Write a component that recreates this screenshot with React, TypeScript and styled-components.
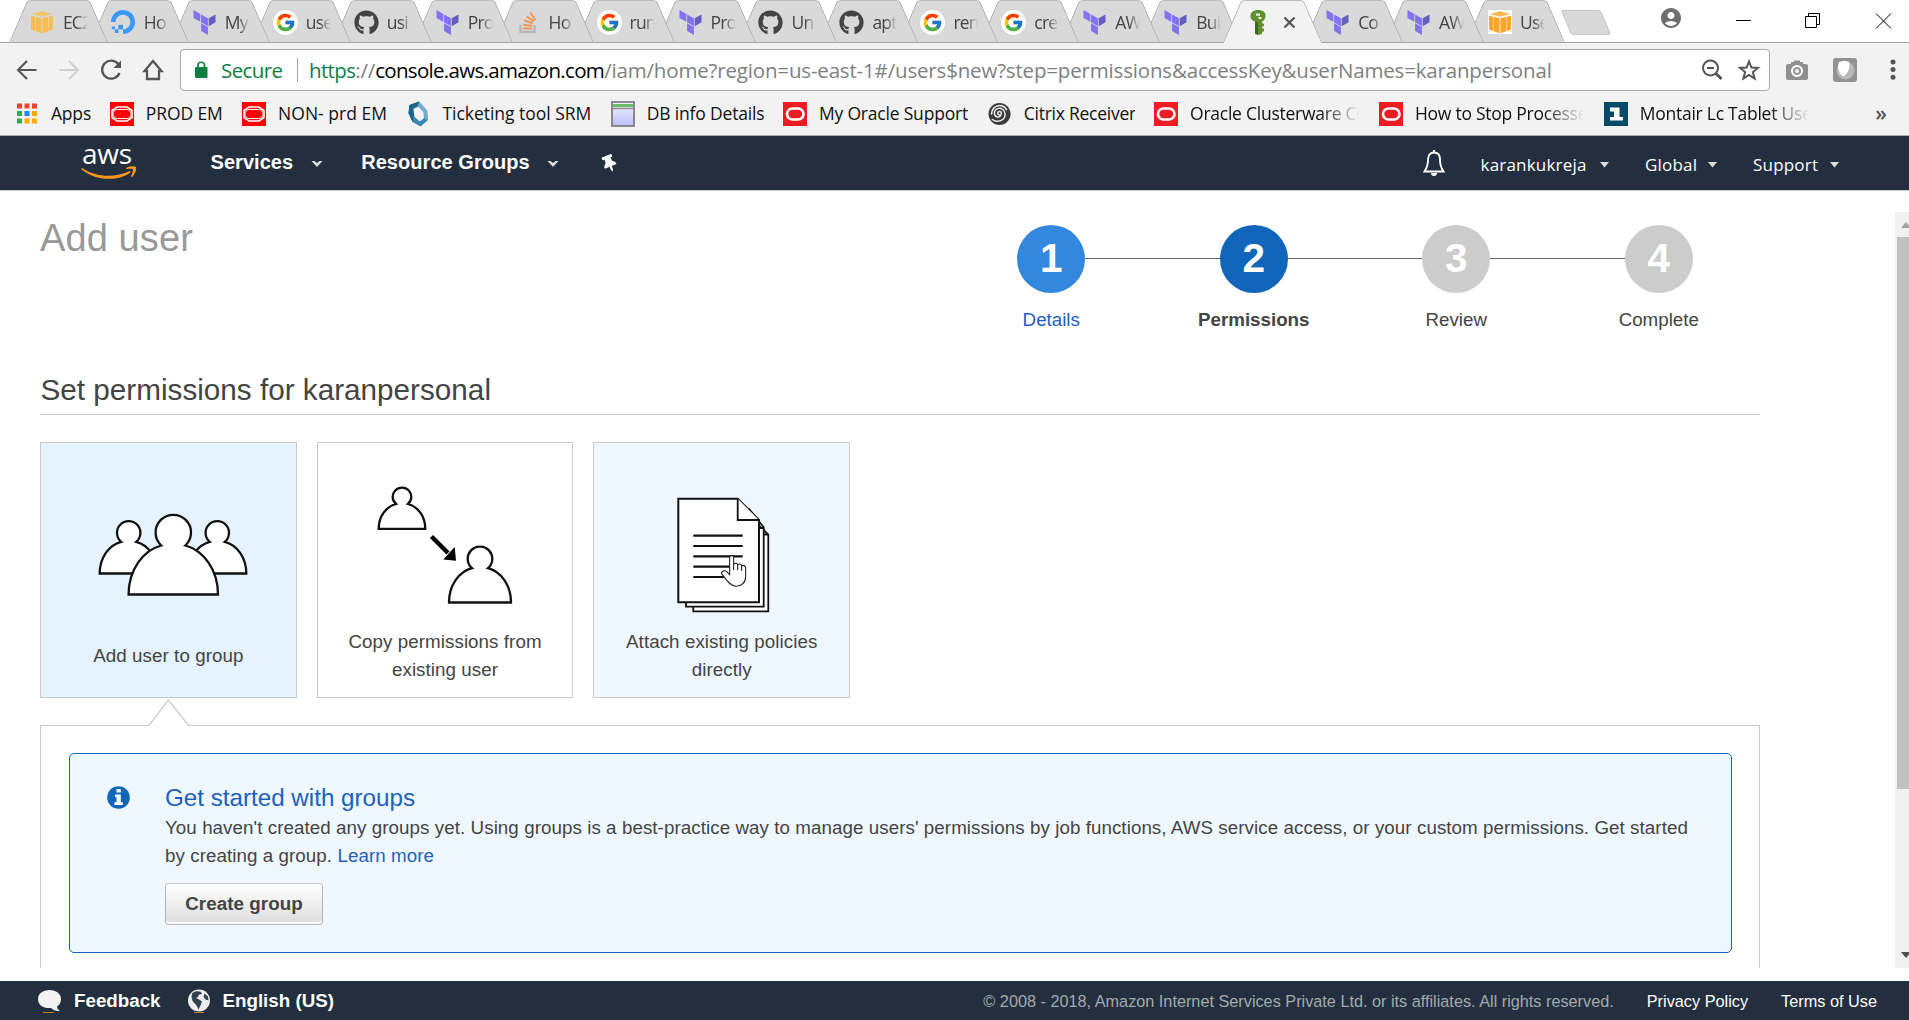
import React from "react";
import styled, { createGlobalStyle, css } from "styled-components";
import { FcGoogle } from "react-icons/fc";
import { FaGithub, FaThumbtack } from "react-icons/fa";
import { SiDigitalocean } from "react-icons/si";
import { MdAccountCircle } from "react-icons/md";

const GlobalStyle = createGlobalStyle`
  *, *::before, *::after { box-sizing: border-box; }
  html, body { margin: 0; padding: 0; background: #fff; overflow: hidden; }
  svg { display: block; flex: none; }
`;

const ui = `"Open Sans", "Noto Sans", sans-serif`;
const sans = `"Liberation Sans", Arial, sans-serif`;

const Window = styled.div`
  display: flex;
  flex-direction: column;
  width: 1909px;
  height: 1020px;
  overflow: hidden;
  font-family: ${sans};
  font-size: 18.75px;
  line-height: 28px;
  color: #444;
`;

/* ---------- tab strip ---------- */

const TabStrip = styled.div`
  display: flex;
  flex: none;
  height: 43px;
  padding-left: 9px;
  border-bottom: 1px solid #a3a3a3;
`;

const Tab = styled.div<{ $order: number; $active?: boolean }>`
  position: relative;
  flex: none;
  display: flex;
  align-items: center;
  width: 99.4px;
  height: 43px;
  padding: 1px 0 0 ${(p) => (p.$active ? 27 : 21.4)}px;
  margin-right: -18.45px;
  z-index: ${(p) => p.$order};

  &::before,
  &::after {
    content: "";
    position: absolute;
    top: 0;
    bottom: 0;
    z-index: -1;
    background: ${(p) => (p.$active ? "#f2f2f2" : "#d9d9d9")};
    border-top: 1px solid #bcbcbc;
    border-bottom: ${(p) => (p.$active ? "0" : "1px solid #a3a3a3")};
  }
  &::before {
    left: 9px;
    right: 32px;
    border-left: 1.4px solid #a6a6a6;
    border-top-left-radius: 4px;
    transform: skewX(-23.3deg);
  }
  &::after {
    left: 32px;
    right: 9px;
    border-right: 1.4px solid #a6a6a6;
    border-top-right-radius: 4px;
    transform: skewX(23.3deg);
  }
`;

const TabIcon = styled.span`
  display: flex;
  align-items: center;
  justify-content: center;
  width: 24px;
  height: 24px;
  flex: none;
`;

const TabTitle = styled.span`
  width: 25px;
  margin-left: 8.5px;
  overflow: hidden;
  white-space: nowrap;
  font: 17.5px/24px ${ui};
  letter-spacing: -0.8px;
  color: #444;
  mask-image: linear-gradient(to right, #000 55%, transparent 100%);
`;

const GoogleDisc = styled.span`
  display: flex;
  padding: 2px;
  border-radius: 50%;
  background: #fff;
`;

const TabClose = styled.span`
  display: flex;
  margin-left: 17px;
`;

const NewTab = styled.div`
  flex: none;
  width: 40px;
  height: 25px;
  margin: 10px 0 0 19px;
  background: #d9d9d9;
  border: 1px solid #c4c4c4;
  border-radius: 3px;
  transform: skewX(23deg);
`;

const WindowControls = styled.div`
  display: flex;
  align-items: flex-start;
  gap: 53px;
  margin-left: auto;
  padding: 12px 17px 0 0;
`;

const Account = styled.span`
  display: flex;
  margin-top: -6px;
`;

/* ---------- toolbar ---------- */

const Toolbar = styled.div`
  display: flex;
  flex: none;
  align-items: center;
  height: 54px;
  padding: 0 0 0 15px;
  background: #f2f2f2;
`;

const NavButtons = styled.div`
  display: flex;
  gap: 18px;
  margin-right: 15px;
`;

const Omnibox = styled.div`
  display: flex;
  flex: none;
  align-items: center;
  width: 1590px;
  height: 42px;
  padding: 0 8px 0 14px;
  background: #fff;
  border: 1px solid #a9a9a9;
  border-radius: 4px;
  font: 20.5px/28px ${ui};
  white-space: nowrap;
`;

const Secure = styled.span`
  width: 62px;
  margin-left: 13px;
  color: #0b8043;
  letter-spacing: -0.6px;
`;

const Divider = styled.span`
  width: 1px;
  height: 24px;
  margin: 0 11px 0 14px;
  background: #a5a5a5;
`;

const Url = styled.span`
  flex: 1;
  color: #808080;
  letter-spacing: -0.17px;
`;
const UrlScheme = styled.span`
  color: #0b8043;
  letter-spacing: -0.65px;
`;
const UrlHost = styled.span`
  color: #000;
  letter-spacing: -0.69px;
`;

const OmniActions = styled.span`
  display: flex;
  gap: 13px;
`;

const Extensions = styled.div`
  display: flex;
  align-items: center;
  gap: 24px;
  margin-left: 15px;
`;

const Dots = styled.span`
  display: flex;
  margin-left: 9px;
`;

/* ---------- bookmarks ---------- */

const BookmarkBar = styled.div`
  display: flex;
  flex: none;
  align-items: center;
  height: 39px;
  padding: 0 22px 4px 15px;
  background: #f2f2f2;
  border-bottom: 1px solid #aaa;
`;

const Bookmark = styled.div`
  display: flex;
  align-items: center;
  flex: none;
  gap: 12px;
  margin-right: 19.3px;
`;

const BookmarkLabel = styled.span<{ $w: number; $ls: number; $fade?: boolean }>`
  width: ${(p) => p.$w}px;
  overflow: hidden;
  white-space: nowrap;
  font: 17.5px/26px ${ui};
  letter-spacing: ${(p) => p.$ls}px;
  padding-bottom: 2px;
  color: #111;
  ${(p) =>
    p.$fade &&
    css`
      mask-image: linear-gradient(to right, #000 calc(100% - 40px), transparent 100%);
    `}
`;

const More = styled.span`
  margin-left: auto;
  padding-bottom: 2px;
  font: 600 21px/24px ${ui};
  color: #555;
`;

/* ---------- console navigation ---------- */

const ConsoleNav = styled.nav`
  display: flex;
  flex: none;
  align-items: center;
  height: 55px;
  padding: 0 70px 0 81px;
  background: #232f3e;
  border-bottom: 1px solid #c9ccd0;
  color: #fff;
`;

const Logo = styled.div`
  display: flex;
  flex-direction: column;
  width: 56px;
  margin-right: 73.5px;
`;

const LogoWord = styled.span`
  height: 19px;
  padding-left: 1px;
  font: 500 28px/13px ${ui};
  letter-spacing: -0.2px;
`;

const NavItem = styled.div`
  display: flex;
  align-items: center;
  gap: 17.5px;
  margin-right: 38.5px;
  padding-bottom: 2px;
  font-weight: bold;
  font-size: 20px;
  letter-spacing: 0.05px;
`;

const Pin = styled.span`
  display: flex;
  margin-left: 3px;
  transform: rotate(-22deg);
`;

const AccountNav = styled.div`
  display: flex;
  align-items: center;
  gap: 36px;
  margin-left: auto;
`;

const AccountItem = styled.div<{ $w: number }>`
  display: flex;
  align-items: center;
  gap: 12px;
  font: 17px/24px ${ui};
  letter-spacing: 0.2px;
  padding-top: 3px;
  white-space: nowrap;
  & > span {
    width: ${(p) => p.$w}px;
  }
`;

/* ---------- page ---------- */

const Main = styled.main`
  display: flex;
  flex: none;
  height: 777px;
  overflow: hidden;
`;

const Content = styled.div`
  display: flex;
  flex-direction: column;
  width: 1720px;
  margin-left: 40px;
`;

const PageHead = styled.header`
  display: flex;
  flex: none;
  justify-content: space-between;
  align-items: flex-start;
  height: 181px;
  padding-top: 26px;
`;

const Title = styled.h1`
  margin: 0;
  font-weight: normal;
  font-size: 38px;
  line-height: 43px;
  letter-spacing: 0.1px;
  color: #999;
`;

const Steps = styled.ol`
  display: flex;
  margin: 8px 0 0;
  padding: 0;
  list-style: none;
`;

const Step = styled.li<{ $current?: boolean; $link?: boolean }>`
  position: relative;
  display: flex;
  flex-direction: column;
  align-items: center;
  gap: 13px;
  width: 202.5px;
  color: ${(p) => (p.$link ? "#1e5fbf" : "#444")};
  font-weight: ${(p) => (p.$current ? "bold" : "normal")};

  &:not(:last-child)::before {
    content: "";
    position: absolute;
    top: 33px;
    left: 50%;
    width: 100%;
    height: 1px;
    background: #666;
  }
`;

const StepCircle = styled.span<{ $color: string }>`
  position: relative;
  z-index: 1;
  width: 68px;
  height: 68px;
  border-radius: 50%;
  background: ${(p) => p.$color};
  color: #fff;
  font-weight: bold;
  font-size: 40.5px;
  line-height: 67px;
  text-align: center;
`;

const SectionTitle = styled.h2`
  flex: none;
  margin: 0 0 27px;
  padding: 0 0 6px 0.5px;
  height: 43px;
  border-bottom: 1px solid #ccc;
  font-weight: normal;
  font-size: 29.7px;
  line-height: 36px;
`;

const Cards = styled.div`
  display: flex;
  flex: none;
  gap: 20px;
  margin-bottom: 27px;
`;

const Card = styled.div<{ $bg: string; $bottom: number }>`
  display: flex;
  flex-direction: column;
  width: 256.7px;
  height: 256px;
  padding-bottom: ${(p) => p.$bottom}px;
  background: ${(p) => p.$bg};
  border: 1px solid #ccc;
  text-align: center;
  letter-spacing: 0.07px;
`;

const Art = styled.svg`
  width: 254.7px;
  flex: 1;
  overflow: visible;
  fill: #fff;
  stroke: #111;
  stroke-width: 2.3;
`;

const Panel = styled.section`
  position: relative;
  flex: 1;
  padding: 27px 27px 0 28px;
  border: solid #ccc;
  border-width: 1px 1px 0;
`;

const Notch = styled.svg`
  position: absolute;
  left: 107px;
  top: -27px;
`;

const Notice = styled.div`
  display: flex;
  height: 200px;
  padding: 29px 38px 0 37px;
  background: #f0f8ff;
  border: 1px solid #1166bb;
  border-radius: 5px;
`;

const NoticeIcon = styled.span`
  display: flex;
  width: 58px;
  padding-top: 3px;
`;

const NoticeBody = styled.div`
  flex: 1;
`;

const NoticeTitle = styled.div`
  font-size: 24.2px;
  line-height: 30px;
  color: #1e5fbf;
`;

const NoticeText = styled.p`
  margin: 0 -20px 13px 0;
  padding-top: 1px;
  white-space: nowrap;
  letter-spacing: 0.069px;
`;

const Link = styled.a`
  color: #1e5fbf;
`;

const Button = styled.button`
  display: block;
  width: 158px;
  height: 42px;
  padding: 0 0 1px;
  border: 1px solid #b5b5b5;
  border-top-color: #ccc;
  border-radius: 4px;
  background: linear-gradient(#fff, #ddd);
  box-shadow: inset 0 -2px 0 #fff;
  font: bold 18.75px/28px ${sans};
  letter-spacing: 0.07px;
  color: #444;
`;

const Scrollbar = styled.div`
  display: flex;
  flex-direction: column;
  width: 14px;
  margin: 21px 0 0 auto;
  padding-left: 2px;
  background: #f1f1f1;
`;

const ScrollArrow = styled.span<{ $h: number; $pad: number }>`
  height: ${(p) => p.$h}px;
  padding: ${(p) => p.$pad}px 0 0 4px;
`;

const Thumb = styled.div`
  height: 552px;
  background: #c1c1c1;
`;

/* ---------- footer ---------- */

const Footer = styled.footer`
  display: flex;
  flex: none;
  align-items: center;
  height: 39px;
  margin-top: 13px;
  padding: 0 32px 0 37px;
  background: #232f3e;
  color: #fff;
  font-size: 16.3px;
  white-space: nowrap;
`;

const FooterTool = styled.span`
  display: flex;
  align-items: center;
  gap: 12px;
  margin-right: 26px;
  font-weight: bold;
  font-size: 18.75px;
`;

const Copyright = styled.span`
  margin-left: auto;
  font-size: 16.25px;
  color: #a2aaad;
`;

const FooterLink = styled.a`
  margin-left: 33px;
`;

/* ---------- drawings ---------- */

const Cube = ({ pale }: { pale?: boolean }) => (
  <svg width="24" height="24" viewBox="0 0 24 24">
    {!pale && <rect width="24" height="24" fill="#fff" />}
    <g fill={pale ? "#f6be55" : "#fca62b"}>
      <path d="M2 4.200 12 1l10 3.200L12 6.800z" opacity=".8" />
      <path d="M1 5.800 11.600 8.300V23.200L1 19.500z" />
      <path d="M23 5.800 12.400 8.300V23.200L23 19.500z" />
    </g>
    <path d="M5.500 7v14M18.500 7v14" stroke={pale ? "#f9d48e" : "#fdd391"} strokeWidth=".8" />
  </svg>
);

const Terraform = () => (
  <svg width="25" height="25" viewBox="0 0 24 24" fill="#8373f0">
    <path d="M1.440 0v7.575l6.561 3.790V3.787z" />
    <path d="M8.720 4.230v7.575l6.561 3.787V8.018z" />
    <path d="M8.720 12.635v7.575L15.280 24v-7.578z" />
    <path d="M22.560 4.227l-6.561 3.791v7.574l6.560-3.787z" fill="#675cc0" />
  </svg>
);

const StackIcon = () => (
  <svg width="20" height="24" viewBox="0 0 20 24" fill="none">
    <path d="M2.500 15v7h14v-7" stroke="#b5b7b9" strokeWidth="2.300" />
    <g stroke="#f2995a" strokeWidth="2">
      <path d="M5 18.500h9M5.200 14.700l9 1M6.200 10.500l8.600 2.700M8.500 6.300l7.500 5M12.300 2.500l5 7.500" />
    </g>
  </svg>
);

const KeyIcon = () => (
  <svg width="16" height="25" viewBox="0 0 16 25">
    <path
      d="M8 0c5 0 8 2.500 7.500 6.500C15 9.500 13.500 11 12 11.500V13l2 1v2l-2 .8V18l2 1v2l-2 1v2l-4 1-3-1.500V11.500C2 10.500.5 9 .5 6.500.3 2.500 3.500 0 8 0z"
      fill="#5f8f2f"
    />
    <path d="M5 11.500 8 12v13l-3-1.500z" fill="#3c6a1c" />
    <path d="M6 3.500h4v2.300H6zM8.500 7h3v2h-3z" fill="#e9f3dc" />
  </svg>
);

const icons: Record<string, React.ReactNode> = {
  cube: <Cube pale />,
  cube2: <Cube />,
  ocean: <SiDigitalocean size={24} color="#3b99fc" />,
  terraform: <Terraform />,
  google: (
    <GoogleDisc>
      <FcGoogle size={21} />
    </GoogleDisc>
  ),
  github: <FaGithub size={25} color="#444" />,
  stack: <StackIcon />,
};

const Oracle = ({ old }: { old?: boolean }) => (
  <svg width="24" height="24" viewBox="0 0 24 24">
    <rect width="24" height="24" fill={old ? "#f00" : "#ed1c24"} />
    {old ? (
      <>
        <path d="M7 5h10l5 3.500v7L17 19H7l-5-3.500v-7z" fill="none" stroke="#fff" strokeWidth="1.600" />
        <rect x="3" y="7.500" width="18" height="9" rx="4.500" fill="none" stroke="#fff" strokeWidth="1" />
      </>
    ) : (
      <rect x="4" y="6.500" width="16.500" height="11" rx="5.500" fill="none" stroke="#fff" strokeWidth="2.600" />
    )}
  </svg>
);

const AppsIcon = () => {
  const colors = ["#ea4335", "#ea4335", "#ea4335", "#34a853", "#1e88f5", "#f9ab0a", "#34a853", "#f9ab0a", "#f9ab0a"];
  return (
    <svg width="24" height="24" viewBox="0 0 24 24">
      {colors.map((c, i) => (
        <rect key={i} x={2 + (i % 3) * 7.500} y={1.500 + Math.floor(i / 3) * 7.500} width="5" height="5" fill={c} />
      ))}
    </svg>
  );
};

const HexIcon = () => (
  <svg width="24" height="26" viewBox="0 0 24 26">
    <path d="M3.500 4 13 .5l8 9 1 9.500-7.500 6.500-8-4.500-4-9z" fill="#3a86b3" />
    <path d="M13 .5l8 9 1 9.500-3-1-1.500-7L12 4z" fill="#74aed0" />
    <path d="M3.500 4 13 .5 12 4 7 7.500 8 14l-1.500 7-4-9z" fill="#1c628e" />
    <path d="M7.500 8 12.500 5.500 17.500 11l.5 6-4 3.500L8.500 16z" fill="#f2f2f2" />
  </svg>
);

const WindowIcon = () => (
  <svg width="24" height="26" viewBox="0 0 24 26">
    <defs>
      <linearGradient id="pane" x1="0" y1="0" x2="0" y2="1">
        <stop offset="0" stopColor="#f4f4ff" />
        <stop offset="1" stopColor="#bdbdfb" />
      </linearGradient>
    </defs>
    <rect x="1" y="1" width="22" height="24" fill="url(#pane)" stroke="#7f7f7f" strokeWidth="1.800" />
    <path d="M2 4.500h20" stroke="#6abf69" strokeWidth="3" />
    <path d="M2 7.500h20" stroke="#8a8a8a" strokeWidth="1.400" />
  </svg>
);

const CitrixIcon = () => (
  <svg width="24" height="24" viewBox="0 0 24 24" fill="none">
    <circle cx="11.500" cy="12" r="11" fill="#3c3c3c" />
    <g stroke="#eee" strokeWidth="1.500" strokeLinecap="round">
      <path d="M11.500 13a1.800 1.800 0 1 1 1.800-2c0 3-2 4.500-4 4-3-.7-3.500-4-2.500-6 1.500-3 5.500-3.500 8-1.500 3 2.500 3 7 .5 9.500-3 3-8 3-11 .5" />
      <path d="M3.500 12c0-5 4-8.500 8-8.500 3 0 5.500 1.500 7 4" />
    </g>
  </svg>
);

const MontairIcon = () => (
  <svg width="24" height="24" viewBox="0 0 24 24">
    <rect width="24" height="24" fill="#064a68" />
    <path d="M6 5.500h9.500V15H19v3.500H6V15h4V9.500H6z" fill="#fff" />
  </svg>
);

const Chevron = () => (
  <svg width="12" height="12" viewBox="0 0 12 12">
    <path d="M.5 5h3L6 7l2.500-2h3L6 11z" fill="#ddd" />
  </svg>
);

const Caret = () => (
  <svg width="9" height="6" viewBox="0 0 9 6">
    <path d="M0 0h9L4.500 5.500z" fill="#ddd" />
  </svg>
);

const person = (cx: number, base: number, w: number, r: number, neckY: number, n: number) =>
  `M${cx - w} ${base}C${cx - w} ${base - (base - neckY) * 0.5} ${cx - w * 0.68} ${neckY + (base - neckY) * 0.1} ${cx - n} ${neckY}` +
  `A${r} ${r} 0 1 1 ${cx + n} ${neckY}` +
  `C${cx + w * 0.68} ${neckY + (base - neckY) * 0.1} ${cx + w} ${base - (base - neckY) * 0.5} ${cx + w} ${base}Z`;

const GroupArt = () => (
  <Art>
    <path d={person(87.700, 130.500, 29, 11.700, 98.800, 7.500)} />
    <path d={person(176.300, 130.500, 29, 11.700, 98.800, 7.500)} />
    <path d={person(132.300, 151.500, 44.700, 17.700, 102.500, 12)} />
  </Art>
);

const CopyArt = () => (
  <Art>
    <path d={person(84, 85.800, 23.300, 9.300, 61, 6)} />
    <path d={person(162, 159.500, 31, 12.300, 125.200, 8)} />
    <path d="M113.500 93.500 130 110" strokeWidth="4.500" stroke="#000" />
    <path d="M138 117.700 125.300 116.500 136.700 104z" fill="#000" stroke="none" />
  </Art>
);

const PolicyArt = () => (
  <Art>
    <path d="M99.300 76.500h60l15 15v76.800h-75zM166 84.500v7h8" strokeWidth="1.800" />
    <path d="M92 66h63l14.700 18.300v79.400H92zM160 77v8h9" strokeWidth="1.800" />
    <path d="M84.300 55.700h59.400L165 77v82.300H84.300z" strokeWidth="2" />
    <path d="M143.700 55.700V77H165" strokeWidth="1.800" />
    <path d="M99.300 92.700h49.400M99.300 103h49.400M99.300 113.300h49.400M99.300 123.700h49.400M99.300 134h40" strokeWidth="2.200" />
    <g transform="translate(-165 -13) scale(.3333)" strokeWidth="3.200" stroke="#1b1b2f">
      <path d="M902 434V383a6 6 0 0 1 12 0v19q10-5 12 2 9-5 12 3 9-3 12 5v28c0 18-13 29-28 29-17 0-28-17-44-38-2-9 11-11 16-5z" />
      <path d="M914 402v18M926 404v16M938 407v15" />
    </g>
  </Art>
);

/* ---------- data ---------- */

const tabs: [string, string][] = [
  ["cube", "EC2"],
  ["ocean", "Ho"],
  ["terraform", "My"],
  ["google", "use"],
  ["github", "usi"],
  ["terraform", "Pro"],
  ["stack", "Ho"],
  ["google", "run"],
  ["terraform", "Pro"],
  ["github", "Un"],
  ["github", "apt"],
  ["google", "ren"],
  ["google", "cre"],
  ["terraform", "AW"],
  ["terraform", "Bui"],
  ["active", ""],
  ["terraform", "Co"],
  ["terraform", "AW"],
  ["cube2", "Use"],
];

const bookmarks: { icon: React.ReactNode; label: string; w: number; ls: number; fade?: boolean }[] = [
  { icon: <AppsIcon />, label: "Apps", w: 39.500, ls: -0.2 },
  { icon: <Oracle old />, label: "PROD EM", w: 77, ls: -0.1 },
  { icon: <Oracle old />, label: "NON- prd EM", w: 109, ls: 0.02 },
  { icon: <HexIcon />, label: "Ticketing tool SRM", w: 149, ls: -0.02 },
  { icon: <WindowIcon />, label: "DB info Details", w: 117, ls: -0.17 },
  { icon: <Oracle />, label: "My Oracle Support", w: 149.500, ls: -0.2 },
  { icon: <CitrixIcon />, label: "Citrix Receiver", w: 111, ls: -0.25 },
  { icon: <Oracle />, label: "Oracle Clusterware Co", w: 169.500, ls: -0.25, fade: true },
  { icon: <Oracle />, label: "How to Stop Processes", w: 169.500, ls: -0.25, fade: true },
  { icon: <MontairIcon />, label: "Montair Lc Tablet User", w: 169.500, ls: -0.25, fade: true },
];

const steps = [
  { n: 1, label: "Details", color: "#3388dd", link: true },
  { n: 2, label: "Permissions", color: "#1166bb", current: true },
  { n: 3, label: "Review", color: "#ccc" },
  { n: 4, label: "Complete", color: "#ccc" },
];

export default function App() {
  return (
    <>
      <GlobalStyle />
      <Window>
        <TabStrip>
          {tabs.map(([icon, title], i) =>
            icon === "active" ? (
              <Tab key={i} $order={40} $active>
                <KeyIcon />
                <TabClose>
                  <svg width="13" height="13" viewBox="0 0 13 13" stroke="#555" strokeWidth="2.200">
                    <path d="M1.500 1.500l10 10M11.500 1.500l-10 10" />
                  </svg>
                </TabClose>
              </Tab>
            ) : (
              <Tab key={i} $order={30 - i}>
                <TabIcon>{icons[icon]}</TabIcon>
                <TabTitle>{title}</TabTitle>
              </Tab>
            )
          )}
          <NewTab />
          <WindowControls>
            <Account>
              <MdAccountCircle size={24} color="#6e6e6e" />
            </Account>
            <svg width="16" height="16" stroke="#000">
              <path d="M0 8.500h15" />
            </svg>
            <svg width="16" height="17" stroke="#000" fill="none">
              <path d="M.5 4.500h11v11H.5zM3.500 4.500v-3h11v11h-3" />
            </svg>
            <svg width="18" height="17" stroke="#000" fill="none">
              <path d="M2 1.500l15 15M17 1.500l-15 15" />
            </svg>
          </WindowControls>
        </TabStrip>

        <Toolbar>
          <NavButtons>
            <svg width="24" height="24" fill="none" stroke="#555" strokeWidth="2.100">
              <path d="M21.500 12H4M12 3l-9 9 9 9" />
            </svg>
            <svg width="24" height="24" fill="none" stroke="#d0d0d0" strokeWidth="2.100">
              <path d="M2.500 12H20M12 3l9 9-9 9" />
            </svg>
            <svg width="24" height="24" fill="none" stroke="#555" strokeWidth="2.300">
              <path d="M19.500 6.500A9 9 0 1 0 20.500 15" />
              <path d="M22 2.500V10h-7.500z" fill="#555" stroke="none" />
            </svg>
            <svg width="24" height="24" fill="none" stroke="#555" strokeWidth="2.300">
              <path d="M12 3 3.500 13H6v8h12v-8h2.500z" />
            </svg>
          </NavButtons>
          <Omnibox>
            <svg width="13" height="18" viewBox="0 0 13 18">
              <rect y="6" width="12.500" height="11" rx="1" fill="#0b8043" />
              <path d="M3 7V4.500a3.200 3.200 0 0 1 6.500 0V7" fill="none" stroke="#0b8043" strokeWidth="1.700" />
            </svg>
            <Secure>Secure</Secure>
            <Divider />
            <Url>
              <UrlScheme>https</UrlScheme>://<UrlHost>console.aws.amazon.com</UrlHost>
              /iam/home?region=us-east-1#/users$new?step=permissions&amp;accessKey&amp;userNames=karanpersonal
            </Url>
            <OmniActions>
              <svg width="24" height="24" fill="none" stroke="#555" strokeWidth="2">
                <circle cx="10.500" cy="10" r="7.500" />
                <path d="M7 10h7" />
                <path d="M16 15.500l5.500 5.500" strokeWidth="3" />
              </svg>
              <svg width="24" height="24" fill="none" stroke="#555" strokeWidth="2">
                <path d="M12 3.500l2.400 6 6.600.4-5.100 4.200 1.700 6.400L12 17l-5.600 3.500 1.700-6.400L3 9.900l6.600-.4z" />
              </svg>
            </OmniActions>
          </Omnibox>
          <Extensions>
            <svg width="24" height="24" viewBox="0 0 24 24">
              <path d="M3 6h3V4h3V2.500h6V4h3v2h3a2 2 0 0 1 2 2v12a2 2 0 0 1-2 2H3a2 2 0 0 1-2-2V8a2 2 0 0 1 2-2z" fill="#909090" />
              <circle cx="12" cy="13" r="5" fill="#999" stroke="#fff" strokeWidth="2" />
              <circle cx="12" cy="13" r="2" fill="#eee" />
            </svg>
            <svg width="24" height="24" viewBox="0 0 24 24">
              <rect width="24" height="24" rx="3" fill="#929292" />
              <circle cx="12.500" cy="12.500" r="9" fill="#b9b9b9" />
              <path d="M6 4c4-1.500 9-1 10.500.5C17 11 14 17 10 18.500 6 16 4 9 6 4z" fill="#fff" />
            </svg>
            <Dots>
              <svg width="6" height="22" viewBox="0 0 6 22" fill="#555">
                <circle cx="3" cy="3" r="2.500" />
                <circle cx="3" cy="10.600" r="2.500" />
                <circle cx="3" cy="18.200" r="2.500" />
              </svg>
            </Dots>
          </Extensions>
        </Toolbar>

        <BookmarkBar>
          {bookmarks.map((b) => (
            <Bookmark key={b.label}>
              {b.icon}
              <BookmarkLabel $w={b.w} $ls={b.ls} $fade={b.fade}>
                {b.label}
              </BookmarkLabel>
            </Bookmark>
          ))}
          <More>»</More>
        </BookmarkBar>

        <ConsoleNav>
          <Logo>
            <LogoWord>aws</LogoWord>
            <svg width="56" height="14" viewBox="0 0 56 14">
              <path d="M1 2c14 9.500 33 10 48 3l.8 1.200C37 16 14 15 0 3z" fill="#f7981d" />
              <path d="M45 2c3-2 8-2 10-1 .8 2-1 7.500-4 10l-1-.5c1-2.500 2.500-6 1.800-7.200-1-.8-4.500-.5-6.500-.2z" fill="#f7981d" />
            </svg>
          </Logo>
          <NavItem>
            Services <Chevron />
          </NavItem>
          <NavItem>
            Resource Groups <Chevron />
          </NavItem>
          <Pin>
            <FaThumbtack size={17} />
          </Pin>
          <AccountNav>
            <svg width="22" height="28" viewBox="0 0 22 28" fill="none" stroke="#fff" strokeWidth="1.900">
              <path d="M11 3.500c-4 0-6 3-6 7 0 6-1 8.500-3.500 12h19C18 19 17 16.500 17 10.500c0-4-2-7-6-7z" />
              <path d="M11 1v3" />
              <path d="M8 24h6a3 3 0 0 1-6 0z" fill="#fff" stroke="none" />
            </svg>
            <AccountItem $w={107.5}>
              <span>karankukreja</span> <Caret />
            </AccountItem>
            <AccountItem $w={51}>
              <span>Global</span> <Caret />
            </AccountItem>
            <AccountItem $w={65}>
              <span>Support</span> <Caret />
            </AccountItem>
          </AccountNav>
        </ConsoleNav>

        <Main>
          <Content>
            <PageHead>
              <Title>Add user</Title>
              <Steps>
                {steps.map((s) => (
                  <Step key={s.n} $current={s.current} $link={s.link}>
                    <StepCircle $color={s.color}>{s.n}</StepCircle>
                    {s.label}
                  </Step>
                ))}
              </Steps>
            </PageHead>
            <SectionTitle>Set permissions for karanpersonal</SectionTitle>
            <Cards>
              <Card $bg="#e5f2ff" $bottom={27}>
                <GroupArt />
                Add user to group
              </Card>
              <Card $bg="#fff" $bottom={13}>
                <CopyArt />
                <span>
                  Copy permissions from
                  <br />
                  existing user
                </span>
              </Card>
              <Card $bg="#f0f8ff" $bottom={13}>
                <PolicyArt />
                <span>
                  Attach existing policies
                  <br />
                  directly
                </span>
              </Card>
            </Cards>
            <Panel>
              <Notch width="42" height="28" viewBox="0 0 42 28">
                <path d="M.5 27.500 20.500 1l20.500 26.500z" fill="#fff" />
                <path d="M.5 26.800 20.500 1l20.500 25.800" fill="none" stroke="#ccc" strokeWidth="1.300" />
              </Notch>
              <Notice>
                <NoticeIcon>
                  <svg width="23" height="23" viewBox="0 0 23 23">
                    <circle cx="11.500" cy="11.500" r="11.300" fill="#1166bb" />
                    <path d="M9.500 3h4.300v3.600H9.500zM8 8.500h5.800v7.700h2V19H7.500v-2.800h2V11H8z" fill="#fff" />
                  </svg>
                </NoticeIcon>
                <NoticeBody>
                  <NoticeTitle>Get started with groups</NoticeTitle>
                  <NoticeText>
                    You haven't created any groups yet. Using groups is a best-practice way to manage users' permissions by
                    job functions, AWS service access, or your custom permissions. Get started
                    <br />
                    by creating a group. <Link>Learn more</Link>
                  </NoticeText>
                  <Button>Create group</Button>
                </NoticeBody>
              </Notice>
            </Panel>
          </Content>
          <Scrollbar>
            <ScrollArrow $h={25} $pad={10}>
              <svg width="10" height="6" viewBox="0 0 10 6">
                <path d="M0 6 5 0l5 6z" fill="#a3a3a3" />
              </svg>
            </ScrollArrow>
            <Thumb />
            <ScrollArrow $h={179} $pad={163}>
              <svg width="10" height="6" viewBox="0 0 10 6">
                <path d="M0 0 5 6l5-6z" fill="#505050" />
              </svg>
            </ScrollArrow>
          </Scrollbar>
        </Main>

        <Footer>
          <FooterTool>
            <svg width="25" height="24" viewBox="0 0 25 24">
              <path d="M12.500 1C19 1 24 4.500 24 10c0 3.500-1.500 6-4 7.500.3 2 1.500 3.500 3 4.500-4 .3-7-1-9-3C6 19.500 1 16 1 10 1 4.500 6 1 12.500 1z" fill="#f2f2f2" />
              <path d="M6 23.500h11" stroke="#c77d1c" />
            </svg>
            Feedback
          </FooterTool>
          <FooterTool>
            <svg width="24" height="24" viewBox="0 0 24 24">
              <circle cx="12" cy="11.500" r="11" fill="#eee" />
              <path d="M5 4.500C8 1.500 12 2 14 3l1 2-3 .5-1 2.500-2 1 3 1.500 3 2-1.500 4-2 4-2-4-4-4.500-1-4zM17.500 4.500l3.500 3 .5 4-3-1-2-3z" fill="#33404f" />
              <path d="M7 23.500h10" stroke="#c77d1c" />
            </svg>
            English (US)
          </FooterTool>
          <Copyright>© 2008 - 2018, Amazon Internet Services Private Ltd. or its affiliates. All rights reserved.</Copyright>
          <FooterLink>Privacy Policy</FooterLink>
          <FooterLink>Terms of Use</FooterLink>
        </Footer>
      </Window>
    </>
  );
}
